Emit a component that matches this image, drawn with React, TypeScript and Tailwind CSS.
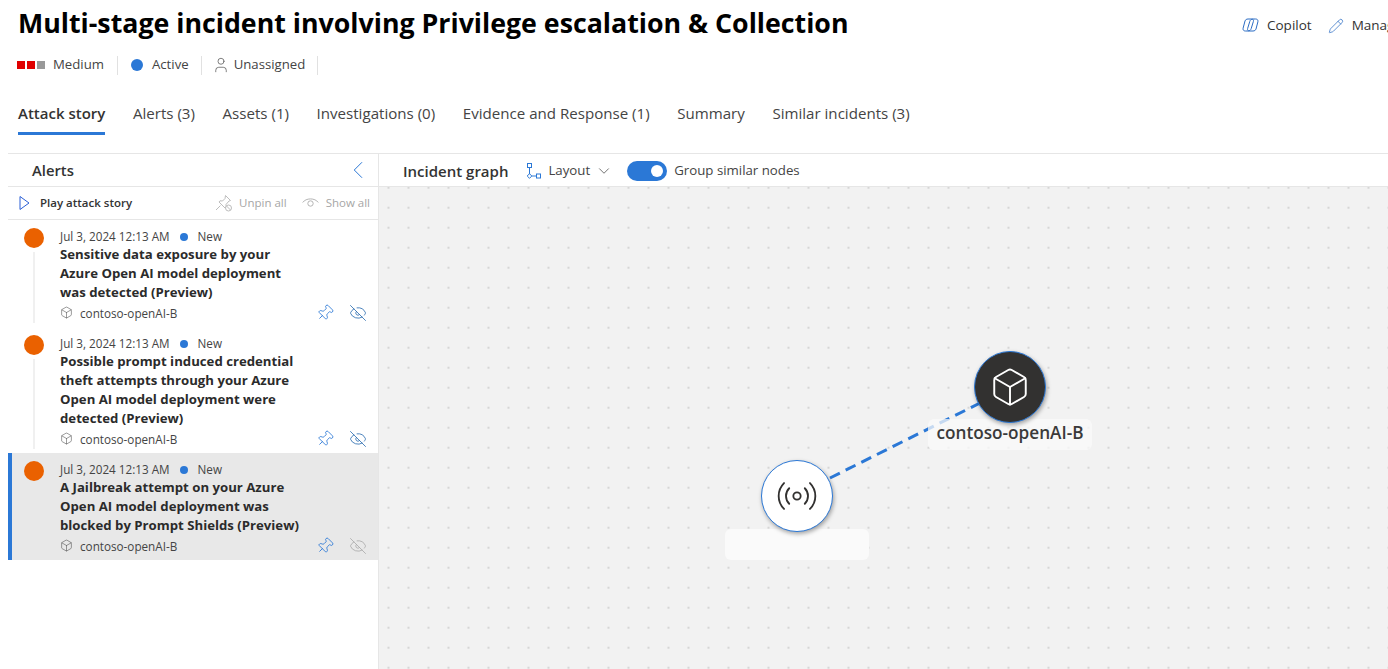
import { Pin, EyeOff, Box, Radio, Pencil, ChevronLeft, ChevronDown, User } from "lucide-react";

function PinOff() {
  return (
    <svg width="20" height="20" viewBox="0 0 20 20" fill="none" stroke="#bdbdbd" strokeWidth="1">
      <path d="M11.5 2.5l5 5-1.5.5-3 3.5.2 2.5-1.2 1-6-6 1-1.2 2.5.2 2.5-2.5z" />
      <path d="M2 17l4.5-4.5" />
      <circle cx="14.5" cy="15" r="3" fill="white" />
      <path d="M12.5 13l4 4" />
    </svg>
  );
}

function ArchEye() {
  return (
    <svg width="17" height="12" viewBox="0 0 17 12" fill="none" stroke="#b5b5b5" strokeWidth="1">
      <path d="M0.7 5.5C4 0.7 13 0.7 16.3 5.5" />
      <circle cx="8.5" cy="6.5" r="2.7" />
    </svg>
  );
}

function PlayOutline() {
  return (
    <svg width="11" height="16" viewBox="0 0 11 16" fill="none" stroke="#2b5fd6" strokeWidth="1">
      <path d="M1 1.5L10 8L1 14.5Z" />
    </svg>
  );
}

function LayoutIcon() {
  return (
    <svg width="16" height="16" viewBox="0 0 16 16" fill="none" stroke="#2b78d6" strokeWidth="1">
      <rect x="1.5" y="0.5" width="4" height="4" />
      <path d="M3.5 4.5v6.5M6 13h4.5" />
      <path d="M3.5 10.7l2.3 2.3-2.3 2.3-2.3-2.3z" />
      <rect x="10.5" y="11" width="4" height="4" />
    </svg>
  );
}

function CopilotIcon() {
  const blob = "M6 2h3.5c1.5 0 2.3 1 1.9 2.4L9.2 11.6C8.8 13 7.6 14 6.1 14H3.4C1.6 14 .7 12.8 1.1 11.2L3 4C3.3 2.8 4.5 2 6 2z";
  return (
    <svg width="17" height="17" viewBox="0 0 17 17" fill="none" stroke="#2b6cc4" strokeWidth="1" className="shrink-0">
      <path d={blob} />
      <path d={blob} transform="rotate(180 8.5 8.5) translate(0 1)" />
    </svg>
  );
}

function Alert({ title, selected, line, dimEye }: { title: string[]; selected?: boolean; line?: boolean; dimEye?: boolean }) {
  return (
    <div className={`flex border-l-4 pl-3 pt-2 pb-[3px] ${selected ? "border-[#2b78d6] bg-[#e8e8e8]" : "border-transparent"}`}>
      <div className="-mb-[3px] flex w-5 flex-col items-center pb-1">
        <div className="h-5 w-5 shrink-0 rounded-full bg-[#ea6100]" />
        {line && <div className="mt-1 w-0.5 flex-1 bg-[#f0f0f0]" />}
      </div>
      <div className="ml-4 w-[308px]">
        <div className="flex h-[17px] items-center pt-px text-[11.7px] text-[#444]">
          <span>Jul 3, 2024 12:13 AM</span>
          <span className="ml-[10px] h-2 w-2 rounded-full bg-[#2b78d6]" />
          <span className="ml-[10px]">New</span>
        </div>
        {title.map((t) => (
          <div key={t} className="h-[19px] whitespace-nowrap text-[13.2px] leading-[19px] font-bold text-[#2b2b2b]">
            {t}
          </div>
        ))}
        <div className="mt-[2px] flex h-5 items-center pb-[3px] text-[11.7px] text-[#444]">
          <Box size={13} strokeWidth={1} className="text-[#444]" />
          <span className="ml-[7px] mt-[2px]">contoso-openAI-B</span>
          <Pin size={18} strokeWidth={1.1} className="ml-auto rotate-45 text-[#2b78d6]" />
          <EyeOff size={18} strokeWidth={1.1} className={`ml-[15px] mr-px ${dimEye ? "text-[#aaa]" : "text-[#2b6cb0]"}`} />
        </div>
      </div>
    </div>
  );
}

export default function App() {
  return (
    <div className="flex h-[669px] w-[1388px] flex-col overflow-hidden bg-white font-['Open_Sans','Noto_Sans',sans-serif] text-[#2b2b2b]">
      <header className="flex h-[45px] items-center justify-between pl-[18px]">
        <h1 className="whitespace-nowrap text-[26.75px] leading-[45px] font-bold text-black">
          Multi-stage incident involving Privilege escalation &amp; Collection
        </h1>
        <div className="flex w-[146px] shrink-0 items-center overflow-hidden whitespace-nowrap pt-[6px] text-[13.5px] text-[#333]">
          <CopilotIcon />
          <span className="ml-[8px]">Copilot</span>
          <Pencil size={16} strokeWidth={1.1} className="ml-[16px] shrink-0 text-[#2b6cc4]" />
          <span className="ml-[8px]">Manage</span>
        </div>
      </header>

      <div className="mt-[10px] flex h-[20px] items-center pl-[17px] text-[13.2px] text-[#444]">
        <span className="h-2 w-2 bg-[#e00000]" />
        <span className="ml-[2px] h-2 w-2 bg-[#e00000]" />
        <span className="ml-[2px] h-2 w-2 bg-[#999]" />
        <span className="ml-[8px]">Medium</span>
        <span className="ml-[13px] h-[19px] w-px bg-[#e1e1e1]" />
        <span className="ml-[13px] h-3 w-3 rounded-full bg-[#2b78d6]" />
        <span className="ml-[9px]">Active</span>
        <span className="ml-[12px] h-[19px] w-px bg-[#e1e1e1]" />
        <User size={18} strokeWidth={1} className="ml-[10px] text-[#555]" />
        <span className="ml-[4px]">Unassigned</span>
        <span className="ml-[12px] h-[19px] w-px bg-[#e1e1e1]" />
      </div>

      <nav className="mt-[26px] flex h-[36px] items-start gap-[27.6px] pl-[18px] text-[15.1px] leading-[24px] text-[#444]">
        <div className="flex h-[36px] flex-col justify-between text-[15px] font-semibold text-[#333]">
          <span>Attack story</span>
          <span className="mb-[2px] h-[3px] bg-[#2b78d6]" />
        </div>
        <span>Alerts (3)</span>
        <span>Assets (1)</span>
        <span>Investigations (0)</span>
        <span>Evidence and Response (1)</span>
        <span>Summary</span>
        <span>Similar incidents (3)</span>
      </nav>

      <main className="ml-2 mt-[16px] flex min-h-0 flex-1 border-t border-[#e6e6e6]">
        <aside className="flex w-[371px] shrink-0 flex-col border-r border-[#e6e6e6]">
          <div className="flex h-[33px] shrink-0 items-center justify-between border-b border-[#e6e6e6] pl-6 pr-[5px]">
            <span className="text-[14.8px] font-semibold text-[#333]">Alerts</span>
            <ChevronLeft size={30} strokeWidth={0.8} className="-my-2 text-[#2b78d6]" />
          </div>
          <div className="flex h-[33px] shrink-0 items-center border-b border-[#e6e6e6] pl-[11px] pr-2 text-[11.5px]">
            <PlayOutline />
            <span className="ml-[10px] font-semibold text-[#333]">Play attack story</span>
            <span className="ml-auto"><PinOff /></span>
            <span className="ml-[5px] text-[#a6a6a6]">Unpin all</span>
            <span className="ml-[15px]"><ArchEye /></span>
            <span className="ml-[7px] text-[#a6a6a6]">Show all</span>
          </div>
          <Alert line title={["Sensitive data exposure by your", "Azure Open AI model deployment", "was detected (Preview)"]} />
          <Alert
            line
            title={["Possible prompt induced credential", "theft attempts through your Azure", "Open AI model deployment were", "detected (Preview)"]}
          />
          <Alert selected dimEye title={["A Jailbreak attempt on your Azure", "Open AI model deployment was", "blocked by Prompt Shields (Preview)"]} />
        </aside>

        <section className="flex min-w-0 flex-1 flex-col">
          <div className="flex h-[33px] shrink-0 items-center border-b border-[#e6e6e6] pl-6 pt-[2px] text-[13.25px] text-[#444]">
            <span className="text-[15px] font-semibold text-[#333]">Incident graph</span>
            <span className="ml-[18px]"><LayoutIcon /></span>
            <span className="ml-[6px]">Layout</span>
            <ChevronDown size={18} strokeWidth={1} className="ml-[5px] text-[#444]" />
            <span className="ml-[14px] flex h-5 w-10 items-center justify-end rounded-full bg-[#2b78d6] pr-[4px]">
              <span className="h-3 w-3 rounded-full bg-white" />
            </span>
            <span className="ml-[7px]">Group similar nodes</span>
          </div>

          <div className="relative min-h-0 flex-1 bg-[#f2f2f2] bg-[radial-gradient(circle,#d6d6d6_1px,transparent_1.5px)] bg-[size:20px_20px] bg-[position:-0.5px_-9.3px]">
            <svg className="absolute left-0 top-0 h-full w-full" fill="none">
              <path d="M451 291L601 216" stroke="#2b78d6" strokeWidth="3" strokeDasharray="11 6.5" />
            </svg>
            <div className="absolute left-[549px] top-[232px] flex h-[31px] w-[164px] items-center justify-center rounded-md bg-[#fafafa]/75 pb-[3px] text-[17.2px] font-semibold text-[#3a3a3a]">
              contoso-openAI-B
            </div>
            <div className="absolute left-[346px] top-[342px] h-[31px] w-[144px] rounded-md bg-[#fafafa]" />
            <div className="absolute left-[595px] top-[164px] flex h-[72px] w-[72px] items-center justify-center rounded-full border border-[#2b78d6] bg-[#323130] shadow-[1px_2px_4px_rgba(0,0,0,0.35)]">
              <Box size={42} strokeWidth={1.1} className="text-white" />
            </div>
            <div className="absolute left-[382px] top-[273px] flex h-[72px] w-[72px] items-center justify-center rounded-full border border-[#2b78d6] bg-white shadow-[1px_2px_4px_rgba(0,0,0,0.35)]">
              <Radio size={44} strokeWidth={1} className="text-[#323130]" />
            </div>
          </div>
        </section>
      </main>
    </div>
  );
}
